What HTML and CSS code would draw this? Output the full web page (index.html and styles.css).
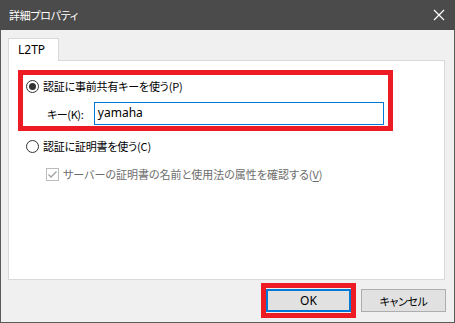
FILE: index.html
```html
<!DOCTYPE html>
<html lang="ja">
<head>
<meta charset="utf-8">
<title>詳細プロパティ</title>
<link rel="stylesheet" href="styles.css">
</head>
<body>
<div class="window">
  <div class="titlebar">
    <span class="title">詳細プロパティ</span>
    <svg class="close" width="12" height="12" viewBox="0 0 12 12"><path d="M1 1 L11 11 M11 1 L1 11" stroke="#ffffff" stroke-width="1.2" fill="none"/></svg>
  </div>
  <div class="content">
    <div class="tabs"><div class="tab">L2TP</div></div>
    <div class="panel">
      <div class="redbox">
        <div class="option">
          <svg class="radio" width="13" height="13" viewBox="0 0 13 13"><circle cx="6.5" cy="6.5" r="6" fill="#fff" stroke="#333" stroke-width="1"/><circle cx="6.5" cy="6.5" r="3.5" fill="#333"/></svg>
          <span>認証に事前共有キーを使う(P)</span>
        </div>
        <div class="keyrow">
          <span class="keylabel">キー(K):</span>
          <div class="input">yamaha</div>
        </div>
      </div>
      <div class="option option2">
        <svg class="radio" width="13" height="13" viewBox="0 0 13 13"><circle cx="6.5" cy="6.5" r="6" fill="#fff" stroke="#333" stroke-width="1"/></svg>
        <span>認証に証明書を使う(C)</span>
      </div>
      <div class="checkrow">
        <svg class="check" width="13" height="13" viewBox="0 0 13 13"><rect x="0.5" y="0.5" width="12" height="12" fill="#fff" stroke="#bcbcbc"/><path d="M2.5 6.5 L5 9 L10.5 3.5" stroke="#a0a0a0" stroke-width="1.3" fill="none"/></svg>
        <span>サーバーの証明書の名前と使用法の属性を確認する(<u>V</u>)</span>
      </div>
    </div>
    <div class="buttons">
      <div class="okframe"><div class="btn ok">OK</div></div>
      <div class="btn">キャンセル</div>
    </div>
  </div>
</div>
</body>
</html>
```

FILE: styles.css
```css
html, body {
  margin: 0;
  padding: 0;
  background: #f0f0f0;
}
body {
  font-family: "Noto Sans CJK JP", "Noto Sans", sans-serif;
  font-size: 11px;
  letter-spacing: -0.4px;
  font-feature-settings: "palt";
  color: #000;
}
.window {
  width: 455px;
  height: 323px;
  box-sizing: border-box;
  border: 1px solid #5a5a5a;
  border-top: none;
  background: #f0f0f0;
  display: flex;
  flex-direction: column;
}
.titlebar {
  height: 30px;
  background: #4b4b4b;
  margin: 0 -1px;
  display: flex;
  align-items: center;
  justify-content: space-between;
  padding: 0 10px 0 9px;
  color: #fff;
  flex-shrink: 0;
}
.title {
  font-size: 11px;
  letter-spacing: -0.3px;
  line-height: 30px;
}
.close {
  display: block;
}
.content {
  padding: 8px 9px 0 7px;
  display: flex;
  flex-direction: column;
}
.tabs {
  display: flex;
  height: 22px;
}
.tab {
  width: 51px;
  height: 23px;
  box-sizing: border-box;
  border: 1px solid #d9d9d9;
  border-bottom: none;
  background: #fff;
  padding-left: 9px;
  line-height: 22px;
  font-family: "Noto Sans", sans-serif;
  font-size: 12px;
  letter-spacing: 0;
  position: relative;
  z-index: 1;
}
.panel {
  height: 220px;
  box-sizing: border-box;
  border: 1px solid #d9d9d9;
  background: #fff;
  padding: 9px 0 0 9px;
}
.redbox {
  width: 375px;
  height: 61px;
  box-sizing: border-box;
  border: 5px solid #ed1c24;
  padding: 5px 4px 0 3px;
  display: flex;
  flex-direction: column;
}
.option {
  display: flex;
  align-items: center;
  height: 13px;
  gap: 4px;
}
.radio, .check {
  display: block;
  flex-shrink: 0;
}
.option span {
  line-height: 13px;
  letter-spacing: -0.2px;
}
.keyrow {
  display: flex;
  align-items: center;
  margin-top: 9px;
  padding-left: 21px;
}
.keylabel {
  width: 47px;
}
.input {
  width: 291px;
  height: 23px;
  box-sizing: border-box;
  border: 1px solid #0078d7;
  padding-left: 3px;
  line-height: 20px;
  font-family: "Noto Sans", sans-serif;
  font-size: 12px;
  letter-spacing: 0;
}
.option2 {
  margin-top: 9px;
  padding-left: 8px;
}
.checkrow {
  display: flex;
  align-items: center;
  gap: 4px;
  margin-top: 13px;
  padding-left: 28px;
  color: #6d6d6d;
  letter-spacing: 0;
}
.checkrow u {
  text-underline-offset: 2px;
}
.buttons {
  display: flex;
  justify-content: flex-end;
  align-items: center;
  gap: 5px;
  margin-top: 3px;
  margin-right: -1px;
}
.okframe {
  border: 5px solid #ed1c24;
  padding: 1px 0;
}
.btn {
  width: 85px;
  height: 23px;
  box-sizing: border-box;
  border: 1px solid #adadad;
  background: #e1e1e1;
  display: flex;
  align-items: center;
  justify-content: center;
  font-size: 11px;
}
.btn.ok {
  border: 2px solid #0078d7;
  font-family: "Noto Sans", sans-serif;
  font-size: 12px;
  letter-spacing: 0;
}
```
